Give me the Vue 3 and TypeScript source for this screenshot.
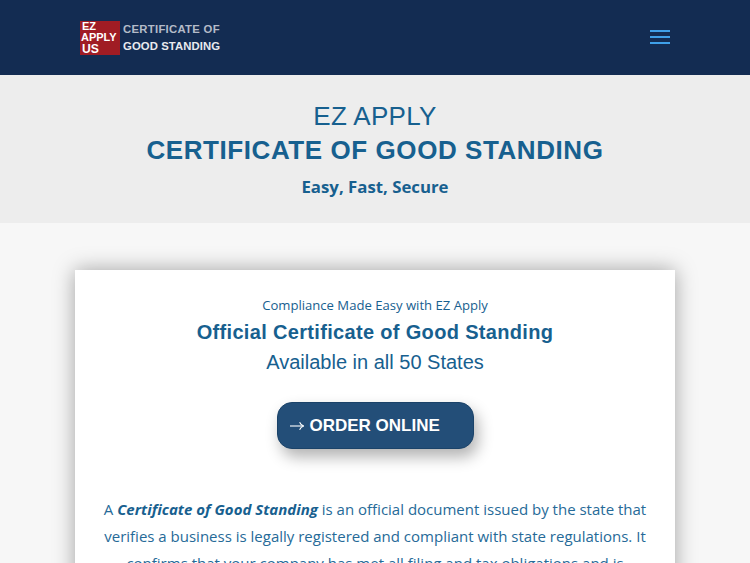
<template>
  <div class="page">
    <header class="topbar">
      <div class="logo">
        <div class="logo-mark">
          <span class="mark-ez">EZ</span>
          <span class="mark-apply">APPLY</span>
          <span class="mark-us">US</span>
        </div>
        <div class="logo-text">
          <span class="logo-line1">CERTIFICATE OF</span>
          <span class="logo-line2">GOOD STANDING</span>
        </div>
      </div>
      <button class="burger" aria-label="Menu">
        <span></span>
        <span></span>
        <span></span>
      </button>
    </header>

    <section class="hero">
      <h1 class="hero-title">EZ APPLY</h1>
      <h2 class="hero-sub">CERTIFICATE OF GOOD STANDING</h2>
      <p class="hero-tag">Easy, Fast, Secure</p>
    </section>

    <main class="content">
      <div class="card">
        <p class="eyebrow">Compliance Made Easy with EZ Apply</p>
        <h3 class="card-title">Official Certificate of Good Standing</h3>
        <p class="card-sub">Available in all 50 States</p>
        <a class="order" href="#">
          <svg class="arrow" width="14" height="10" viewBox="0 0 14 10" fill="none" stroke="#fff" stroke-width="1.1">
            <path d="M0 5H13.4" />
            <path d="M9.6 1.2C10.4 3 11.8 4.4 13.6 5C11.8 5.6 10.4 7 9.6 8.8" />
          </svg>
          ORDER ONLINE
        </a>
        <p class="body-text">
          A <strong><em>Certificate of Good Standing</em></strong> is an official document issued by the state that
          verifies a business is legally registered and compliant with state regulations. It
          confirms that your company has met all filing and tax obligations and is
          authorized to operate.
        </p>
      </div>
    </main>
  </div>
</template>

<script setup lang="ts">
</script>

<style>
html,
body {
  margin: 0;
  height: 563px;
  overflow: hidden;
}
</style>

<style scoped>
.page {
  height: 563px;
  overflow: hidden;
  background: #f7f7f7;
  font-family: "Open Sans", sans-serif;
}

.topbar {
  height: 75px;
  background: #132c52;
  display: flex;
  align-items: center;
  justify-content: space-between;
  padding: 0 80px;
  box-sizing: border-box;
}

.logo {
  display: flex;
  align-items: center;
  gap: 3px;
  margin-top: 1px;
}

.logo-mark {
  width: 40px;
  height: 34px;
  background: #a01c24;
  color: #fff;
  font-family: "Liberation Sans", sans-serif;
  font-weight: 700;
  padding-left: 2px;
  box-sizing: border-box;
  white-space: nowrap;
  display: flex;
  flex-direction: column;
}

.mark-ez {
  font-size: 11px;
  line-height: 11px;
}

.mark-apply {
  font-size: 11px;
  line-height: 11px;
  margin-left: -1px;
}

.mark-us {
  font-size: 12.2px;
  line-height: 12px;
}

.logo-text {
  font: 700 11.3px/17px "Liberation Sans", sans-serif;
  white-space: nowrap;
  display: flex;
  flex-direction: column;
}

.logo-line1 {
  color: #b4bbc8;
  letter-spacing: 0.3px;
}

.logo-line2 {
  color: #e8eaee;
  letter-spacing: 0.1px;
}

.burger {
  width: 20px;
  height: 14px;
  padding: 0;
  margin-top: -2px;
  border: 0;
  background: none;
  display: flex;
  flex-direction: column;
  justify-content: space-between;
}

.burger span {
  display: block;
  height: 2px;
  background: #3fa0e8;
}

.hero {
  height: 148px;
  background: #ededed;
  text-align: center;
  color: #17608f;
  padding-top: 25px;
  box-sizing: border-box;
}

.hero-title {
  margin: 0;
  font: 400 26px/33px "Liberation Sans", sans-serif;
  letter-spacing: 0.3px;
}

.hero-sub {
  margin: 0;
  font: 700 26px/35px "Liberation Sans", sans-serif;
  letter-spacing: 0.57px;
}

.hero-tag {
  margin: 7px 0 0;
  font-size: 16.8px;
  line-height: 24px;
  font-weight: 700;
}

.content {
  padding: 47px 75px 0;
}

.card {
  background: #fff;
  height: 400px;
  padding: 25px 25px 0;
  text-align: center;
  color: #17608f;
  box-shadow: 0 0 20px rgba(0, 0, 0, 0.35);
}

.eyebrow {
  margin: 0;
  font-size: 13.1px;
  line-height: 20px;
}

.card-title {
  margin: 2px 0 0;
  font: 700 20px/30px "Liberation Sans", sans-serif;
  letter-spacing: 0.33px;
}

.card-sub {
  margin: 0;
  font: 400 20px/30px "Liberation Sans", sans-serif;
}

.order {
  display: flex;
  align-items: center;
  gap: 6px;
  width: 197px;
  height: 47px;
  margin: 25px auto 0;
  background: #234e78;
  border: 1px solid #1b4369;
  border-radius: 15px;
  color: #fff;
  font: 700 17px/45px "Liberation Sans", sans-serif;
  text-decoration: none;
  padding-left: 12px;
  box-sizing: border-box;
  box-shadow: 4px 8px 15px rgba(0, 0, 0, 0.3);
}

.body-text {
  margin: 47px 0 0;
  font-size: 15px;
  line-height: 27px;
  color: #266a98;
}

.body-text strong {
  color: #17608f;
}
</style>
